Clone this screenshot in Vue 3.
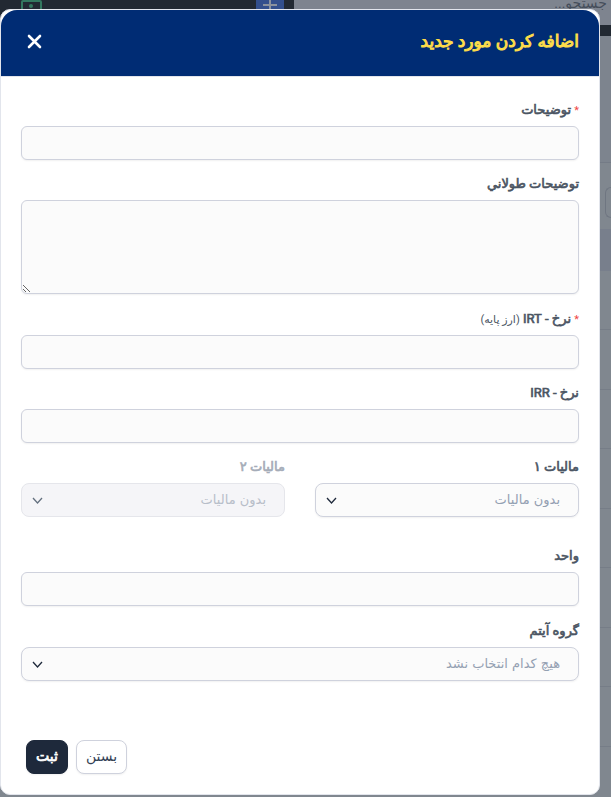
<script setup>
import { reactive } from 'vue'

const form = reactive({
  description: '',
  longDescription: '',
  rateIrt: '',
  rateIrr: '',
  tax1: '',
  tax2: '',
  unit: '',
  group: '',
})
const rows = 9
</script>

<template>
  <div class="screen" dir="rtl">
    <div class="page" aria-hidden="true">
      <header class="topbar">
        <div class="search">جستجو...</div>
        <div class="tools">
          <span class="add">
            <svg width="16" height="16" viewBox="0 0 16 16"><path d="M8 1v14M1 8h14" /></svg>
          </span>
          <svg class="cash" width="21" height="16" viewBox="0 0 21 16">
            <rect x="1" y="1" width="19" height="14" rx="1" />
            <circle cx="10" cy="6" r="2" />
          </svg>
        </div>
      </header>
      <div class="intro"></div>
      <div class="filters"><span class="filter"></span></div>
      <div class="table-head"></div>
      <div class="table-rows">
        <div v-for="n in rows" :key="n" class="table-row"></div>
      </div>
    </div>

    <section class="modal" role="dialog" aria-modal="true" aria-labelledby="modal-title">
      <header class="modal-header">
        <h1 id="modal-title">اضافه کردن مورد جدید</h1>
        <button class="close" type="button" aria-label="بستن">
          <svg width="15" height="15" viewBox="0 0 15 15"><path d="M2 2l11 11M13 2L2 13" /></svg>
        </button>
      </header>

      <form class="modal-body" @submit.prevent>
        <div class="field">
          <label for="description"><span class="required">*</span> توضیحات</label>
          <input id="description" v-model="form.description" class="control" type="text" />
        </div>
        <div class="field roomy">
          <label for="long-description">توضیحات طولاني</label>
          <textarea id="long-description" v-model="form.longDescription" class="control"></textarea>
        </div>
        <div class="field">
          <label for="rate-irt"><span class="required">*</span> نرخ - IRT <small>(ارز پایه)</small></label>
          <input id="rate-irt" v-model="form.rateIrt" class="control" type="text" />
        </div>
        <div class="field">
          <label for="rate-irr">نرخ - IRR</label>
          <input id="rate-irr" v-model="form.rateIrr" class="control" type="text" />
        </div>
        <div class="taxes">
          <div class="field">
            <label for="tax-1">مالیات ۱</label>
            <div class="select">
              <select id="tax-1" v-model="form.tax1" class="control">
                <option value="">بدون مالیات</option>
              </select>
              <svg width="11" height="8" viewBox="0 0 11 8"><path d="M1 1l4.5 5 4.5-5" /></svg>
            </div>
          </div>
          <div class="field disabled">
            <label for="tax-2">مالیات ۲</label>
            <div class="select">
              <select id="tax-2" v-model="form.tax2" class="control" disabled>
                <option value="">بدون مالیات</option>
              </select>
              <svg width="11" height="8" viewBox="0 0 11 8"><path d="M1 1l4.5 5 4.5-5" /></svg>
            </div>
          </div>
        </div>
        <div class="field roomy">
          <label for="unit">واحد</label>
          <input id="unit" v-model="form.unit" class="control" type="text" />
        </div>
        <div class="field">
          <label for="group">گروه آیتم</label>
          <div class="select">
            <select id="group" v-model="form.group" class="control">
              <option value="">هیچ کدام انتخاب نشد</option>
            </select>
            <svg width="11" height="8" viewBox="0 0 11 8"><path d="M1 1l4.5 5 4.5-5" /></svg>
          </div>
        </div>
        <footer class="actions">
          <button class="btn" type="button">بستن</button>
          <button class="btn primary" type="submit">ثبت</button>
        </footer>
      </form>
    </section>
  </div>
</template>

<style>
body {
  margin: 0;
  background: #808790;
}
</style>

<style scoped>
* {
  box-sizing: border-box;
}
.screen {
  position: relative;
  min-height: 100vh;
  overflow: hidden;
  font-family: Roboto, "DejaVu Sans", sans-serif;
  color: #4b5563;
}
.page {
  position: absolute;
  inset: 0;
  overflow: hidden;
  background: #7d848e;
}
.topbar {
  display: flex;
  align-items: flex-start;
  height: 36px;
  background: #222932;
}
.search {
  flex: 0 0 317px;
  height: 25px;
  padding: 0 4px;
  background: #7e848f;
  color: #454d5a;
  font-size: 14px;
  line-height: 6px;
}
.tools {
  flex: 1;
  display: flex;
  justify-content: space-between;
  padding: 0 10px 0 21px;
}
.add {
  display: flex;
  justify-content: center;
  width: 28px;
  height: 18px;
  border-radius: 0 0 8px 8px;
  background: #334f8c;
}
.add svg {
  margin-top: -3px;
  fill: none;
  stroke: #8b929e;
  stroke-width: 2;
}
.cash {
  fill: none;
  stroke: #33785f;
  stroke-width: 2;
}
.cash circle {
  fill: #33785f;
  stroke: none;
}
.intro {
  height: 126px;
}
.filters {
  display: flex;
  height: 67px;
  padding-top: 24px;
  border-top: 1px solid #747b86;
  background: #80878f;
}
.filter {
  width: 6px;
  height: 31px;
  border: 1px solid #6f7681;
  border-right: 0;
  border-radius: 6px 0 0 6px;
}
.table-head {
  height: 42px;
  background: #787f8c;
}
.table-row {
  height: 59px;
  border-bottom: 1px solid #767d87;
  background: #80878f;
}
.table-row:nth-child(even) {
  height: 60px;
}
.modal {
  position: relative;
  margin: 9px 0 2px;
  margin-inline-start: 11px;
  border: 1px solid #e2e5ec;
  border-radius: 10px;
  background: #fff;
}
.modal-header {
  display: flex;
  align-items: center;
  justify-content: space-between;
  height: 67px;
  padding: 0 20px 4px;
  border-bottom: 1px solid #e2e5ec;
  border-radius: 16px 16px 0 0;
  background: #002c74;
}
h1 {
  margin: 0;
  color: #fddc4a;
  font-size: 17px;
  font-weight: 400;
  line-height: 24px;
  -webkit-text-stroke: 0.06em currentColor;
}
.close {
  display: flex;
  padding: 6px;
  border: 0;
  background: none;
}
.close svg {
  fill: none;
  stroke: #fff;
  stroke-width: 2.6;
  stroke-linecap: round;
}
.modal-body {
  padding: 24px 20px 20px;
}
.field {
  margin-bottom: 15px;
}
.roomy {
  margin-bottom: 16px;
}
label {
  display: block;
  height: 20px;
  margin-bottom: 5px;
  color: #4b5563;
  font-size: 13px;
  font-weight: 400;
  line-height: 18px;
  white-space: nowrap;
  -webkit-text-stroke: 0.05em currentColor;
}
.required {
  color: #ef4444;
  font-size: 11px;
  -webkit-text-stroke: 0;
}
small {
  font-size: 11px;
  -webkit-text-stroke: 0;
}
.control {
  display: block;
  width: 100%;
  height: 34px;
  margin: 0;
  padding: 4px 12px;
  border: 1px solid #cfd2dd;
  border-radius: 6px;
  background: #fbfbfb;
  box-shadow: 0 1px 2px rgb(0 0 0 / 6%);
  color: #4b5563;
  font: inherit;
  font-size: 13px;
}
textarea.control {
  height: 94px;
  resize: vertical;
}
.select {
  position: relative;
}
select.control {
  padding: 0 18px 2px 30px;
  border-radius: 8px;
  appearance: none;
  color: #94a0b2;
  font-family: "DejaVu Sans", sans-serif;
}
.select svg {
  position: absolute;
  top: 14px;
  left: 11px;
  fill: none;
  stroke: #1e293b;
  stroke-width: 1.3;
  pointer-events: none;
}
.taxes {
  display: grid;
  grid-template-columns: 1fr 1fr;
  gap: 30px;
  margin-bottom: 15px;
}
.disabled label {
  color: #a5acb8;
}
.disabled .control {
  border-color: #e5e6eb;
  background: #f5f5f8;
  box-shadow: none;
  color: #b8bec9;
  opacity: 1;
}
.select .control:disabled + svg {
  stroke: #64707f;
}
.actions {
  display: flex;
  justify-content: flex-end;
  gap: 8px;
  padding: 44px 0 0 5px;
}
.btn {
  height: 34px;
  padding: 0 9px 2px;
  border: 1px solid #cfd2dd;
  border-radius: 8px;
  background: #fff;
  box-shadow: 0 1px 2px rgb(0 0 0 / 6%);
  color: #334155;
  font: inherit;
  font-size: 14px;
}
.primary {
  border-color: #1e293b;
  background: #1e293b;
  color: #fff;
  -webkit-text-stroke: 0.05em currentColor;
}
</style>
